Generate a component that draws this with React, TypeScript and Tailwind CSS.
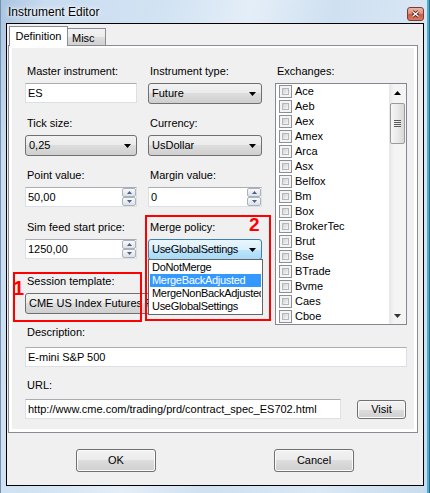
import React from 'react';

const exchanges = [
  'Ace', 'Aeb', 'Aex', 'Amex', 'Arca', 'Asx', 'Belfox', 'Bm', 'Box',
  'BrokerTec', 'Brut', 'Bse', 'BTrade', 'Bvme', 'Caes', 'Cboe', 'Cbot',
];

const mergeOptions = ['DoNotMerge', 'MergeBackAdjusted', 'MergeNonBackAdjusted', 'UseGlobalSettings'];

// classic Vista button face
const face = 'bg-[linear-gradient(#f2f2f2_0%,#ebebeb_50%,#dddddd_50%,#cfcfcf_100%)]';
const boxBorder = 'border border-[#dbdfe6] border-t-[#abadb3]';

const DownArrow = () => (
  <svg width="7" height="4" viewBox="0 0 7 4">
    <path d="M0 0H7L3.5 4Z" fill="#000" />
  </svg>
);

const Label: React.FC<{ children: React.ReactNode; className?: string }> = ({ children, className = '' }) => (
  <div className={`h-[13px] leading-[13px] pl-[2px] whitespace-nowrap ${className}`}>{children}</div>
);

const TextBox: React.FC<{ value: string; className?: string }> = ({ value, className = '' }) => (
  <div className={`h-[20px] bg-white ${boxBorder} flex items-center pl-[2px] leading-[13px] whitespace-nowrap overflow-hidden ${className}`}>
    {value}
  </div>
);

const Combo: React.FC<{ value: string; focused?: boolean; className?: string }> = ({ value, focused = false, className = '' }) => (
  <div
    className={`h-[21px] rounded-[3px] border flex items-center justify-between pl-[3px] pr-[5px] leading-[13px] whitespace-nowrap overflow-hidden ${
      focused
        ? 'border-[#3c7fb1] bg-[linear-gradient(#eaf6fd_0%,#d9f0fc_50%,#bee6fd_50%,#a7d9f5_100%)] tracking-[-0.3px]'
        : `border-[#707070] ${face}`
    } ${className}`}
  >
    <span>{value}</span>
    <DownArrow />
  </div>
);

const SpinButton: React.FC<{ up?: boolean }> = ({ up = false }) => (
  <div className="h-[9px] border border-[#aab2bc] rounded-[2px] bg-[linear-gradient(#f8f9fa,#dde1e6)] flex items-center justify-center">
    <svg width="5" height="3" viewBox="0 0 5 3">
      <path d={up ? 'M0 3H5L2.5 0Z' : 'M0 0H5L2.5 3Z'} fill="#4d6185" />
    </svg>
  </div>
);

const Numeric: React.FC<{ value: string; className?: string }> = ({ value, className = '' }) => (
  <div className={`h-[20px] bg-white ${boxBorder} flex ${className}`}>
    <div className="flex-1 flex items-center pl-[2px] leading-[13px]">{value}</div>
    <div className="w-[14px] flex flex-col">
      <SpinButton up />
      <SpinButton />
    </div>
  </div>
);

const Button: React.FC<{ children: React.ReactNode; className?: string }> = ({ children, className = '' }) => (
  <div className={`rounded-[3px] border border-[#707070] ${face} shadow-[inset_0_0_0_1px_#fbfbfb] flex items-center justify-center leading-[13px] ${className}`}>
    {children}
  </div>
);

const Checkbox = () => (
  <div className="w-[13px] h-[13px] shrink-0 border border-[#8e8f8f] bg-[#f4f4f4] p-[2px]">
    <div className="w-full h-full border border-[#b4b8bd] bg-[linear-gradient(135deg,#cfd2d6,#f7f7f7)]" />
  </div>
);

const Scrollbar = () => (
  <div className="w-[17px] flex flex-col items-center bg-[linear-gradient(90deg,#e6e6e6,#f4f4f4_30%,#f4f4f4)]">
    <div className="h-[17px] w-full flex items-center justify-center">
      <svg width="7" height="4" viewBox="0 0 7 4">
        <path d="M0 4H7L3.5 0Z" fill="#000" />
      </svg>
    </div>
    <div className="mt-[2px] w-[15px] h-[41px] rounded-[2px] border border-[#9b9b9b] bg-[linear-gradient(90deg,#f6f6f6,#e9e9e9_50%,#d8d8d8)] flex items-center justify-center">
      <svg width="7" height="7" viewBox="0 0 7 7">
        <path d="M0 0.5H7M0 2.5H7M0 4.5H7M0 6.5H7" stroke="#5a5a5a" strokeWidth="1" />
      </svg>
    </div>
    <div className="flex-1" />
    <div className="h-[17px] w-full flex items-center justify-center">
      <svg width="7" height="4" viewBox="0 0 7 4">
        <path d="M0 0H7L3.5 4Z" fill="#333" />
      </svg>
    </div>
  </div>
);

const ExchangeList = () => (
  <div className="mt-[5px] h-[242px] border border-[#828790] bg-white flex overflow-hidden">
    <div className="flex-1 overflow-hidden">
      {exchanges.map((name) => (
        <div key={name} className="h-[15px] flex items-center pl-[3px] gap-[3px] leading-[13px]">
          <Checkbox />
          <span>{name}</span>
        </div>
      ))}
    </div>
    <Scrollbar />
  </div>
);

const CloseButton = () => (
  <div className="mt-[7px] w-[17px] h-[14px] rounded-[3px] border border-[#7a3b31] bg-[linear-gradient(#ecb4a6_0%,#e09280_45%,#cf5a42_55%,#da7a61_100%)] flex items-center justify-center">
    <svg width="9" height="8" viewBox="0 0 9 8">
      <path d="M1.5 1.5L7.5 6.5M7.5 1.5L1.5 6.5" stroke="#4a2420" strokeWidth="3" />
      <path d="M1.5 1.5L7.5 6.5M7.5 1.5L1.5 6.5" stroke="#fff" strokeWidth="1.4" />
    </svg>
  </div>
);

const App: React.FC = () => {
  return (
    <div className="w-[430px] h-[493px] flex flex-col overflow-hidden border-l border-l-[#7591ae] bg-[linear-gradient(105deg,#a9c4e0_0%,#c9dcf0_8%,#d2e3f3_30%,#e4eef8_45%,#cfe0f1_60%,#dbe8f5_80%,#c8dbee_100%)] shadow-[inset_-1px_0_0_#3f6080,inset_-3px_0_0_#3db3da] font-['Liberation_Sans',Arial,sans-serif] text-[11px] text-black">
      {/* title bar */}
      <div className="h-[23px] shrink-0 flex items-start justify-between pl-[7px] pr-[6px]">
        <span className="pt-[5px] text-[12px] leading-[14px] [text-shadow:0_0_6px_#fff,0_0_3px_#fff]">Instrument Editor</span>
        <CloseButton />
      </div>

      {/* client area */}
      <div className="ml-[5px] w-[418px] h-[463px] shrink-0 border border-black bg-[#f0f0f0] flex flex-col">
        {/* tabs */}
        <div className="h-[21px] shrink-0 flex items-end pl-[2px]">
          <div className="relative z-10 -mb-px h-[20px] w-[59px] border border-b-0 border-[#898c95] bg-white flex justify-center pt-[3px] leading-[13px]">
            Definition
          </div>
          <div className={`-mb-px h-[18px] w-[38px] border border-l-0 border-b-0 border-[#898c95] ${face} pl-[4px] pt-[3px] leading-[13px]`}>
            Misc
          </div>
        </div>

        <div className="ml-px w-[410px] h-[388px] shrink-0 border border-[#898c95] bg-white pt-[2px] px-[3px] pb-[3px]">
          <div className="relative h-full bg-[#f0f0f0] pt-[17px] pl-[13px]">
            <div className="flex gap-[13px]">
              <div className="w-[237px] flex flex-col">
                <div className="h-[52px] grid grid-cols-[112px_114px] gap-x-[11px] content-start">
                  <div>
                    <Label>Master instrument:</Label>
                    <TextBox value="ES" className="mt-[5px]" />
                  </div>
                  <div>
                    <Label>Instrument type:</Label>
                    <Combo value="Future" className="mt-[5px]" />
                  </div>
                </div>
                <div className="h-[52px] grid grid-cols-[112px_114px] gap-x-[11px] content-start">
                  <div>
                    <Label>Tick size:</Label>
                    <Combo value="0,25" className="mt-[5px]" />
                  </div>
                  <div>
                    <Label>Currency:</Label>
                    <Combo value="UsDollar" className="mt-[5px]" />
                  </div>
                </div>
                <div className="h-[52px] grid grid-cols-[112px_114px] gap-x-[11px] content-start">
                  <div>
                    <Label>Point value:</Label>
                    <Numeric value="50,00" className="mt-[5px]" />
                  </div>
                  <div>
                    <Label>Margin value:</Label>
                    <Numeric value="0" className="mt-[5px]" />
                  </div>
                </div>
                <div className="h-[52px] grid grid-cols-[112px_114px] gap-x-[11px] content-start">
                  <div>
                    <Label>Sim feed start price:</Label>
                    <Numeric value="1250,00" className="mt-[5px]" />
                  </div>
                  <div>
                    <Label>Merge policy:</Label>
                    <Combo value="UseGlobalSettings" focused className="mt-[5px]" />
                  </div>
                </div>
                <div className="h-[52px] pt-[2px]">
                  <Label>Session template:</Label>
                  <Combo value="CME US Index Futures RTH" className="mt-[5px] w-[237px]" />
                </div>
              </div>

              <div className="w-[132px]">
                <Label>Exchanges:</Label>
                <ExchangeList />
              </div>
            </div>

            <Label className="mt-px">Description:</Label>
            <TextBox value="E-mini S&P 500" className="mt-[8px] w-[382px]" />

            <Label className="mt-[12px]">URL:</Label>
            <div className="mt-[7px] flex items-start">
              <TextBox value="http://www.cme.com/trading/prd/contract_spec_ES702.html" className="w-[316px]" />
              <Button className="ml-[16px] mt-px w-[49px] h-[19px]">Visit</Button>
            </div>

            {/* open drop-down of Merge policy */}
            <div className="absolute left-[136px] top-[211px] w-[115px] border border-[#646464] bg-white p-px">
              {mergeOptions.map((opt, i) => (
                <div
                  key={opt}
                  className={`h-[13px] leading-[13px] pl-[2px] tracking-[-0.3px] whitespace-nowrap overflow-hidden ${
                    i === 1 ? 'bg-[#3399ff] text-white' : ''
                  }`}
                >
                  {opt}
                </div>
              ))}
            </div>

            {/* annotation marks */}
            <div className="absolute left-[1px] top-[224px] w-[129px] h-[50px] border-2 border-[#ff0000]" />
            <div className="absolute left-[133px] top-[167px] w-[126px] h-[106px] border-2 border-[#ff0000]" />
            <span className="absolute left-[1px] top-[230px] text-[20px] leading-[20px] font-bold text-[#ff0000]">1</span>
            <span className="absolute left-[237px] top-[167px] text-[19px] leading-[19px] font-bold text-[#ff0000]">2</span>
          </div>
        </div>

        <div className="mt-[16px] flex pl-[69px] gap-[118px]">
          <Button className="w-[80px] h-[23px]">OK</Button>
          <Button className="w-[80px] h-[23px]">Cancel</Button>
        </div>
      </div>
    </div>
  );
};

export default App;
